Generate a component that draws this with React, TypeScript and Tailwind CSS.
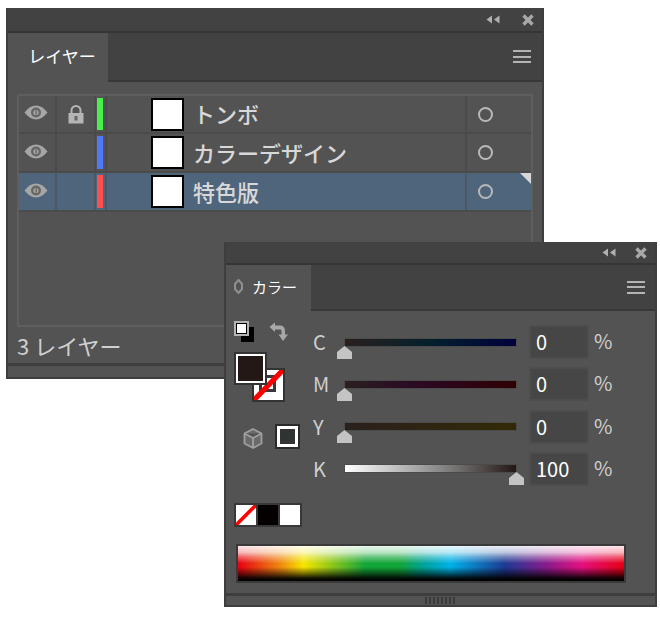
import React from 'react';

const layers = [
  { name: 'トンボ', color: 'bg-[#46f24a]', locked: true, selected: false, height: 'h-[36px]' },
  { name: 'カラーデザイン', color: 'bg-[#4f78fa]', locked: false, selected: false, height: 'h-[37px]' },
  { name: '特色版', color: 'bg-[#fb4f4f]', locked: false, selected: true, height: 'h-[37px]' },
];

const sliders = [
  { label: 'C', value: '0', track: 'bg-[linear-gradient(to_right,#2a201d,#04202c_50%,#00003c)]', thumb: 'left-[-8px]' },
  { label: 'M', value: '0', track: 'bg-[linear-gradient(to_right,#2a201d,#2a0a24_40%,#300004)]', thumb: 'left-[-8px]' },
  { label: 'Y', value: '0', track: 'bg-[linear-gradient(to_right,#2a201d,#322a06)]', thumb: 'left-[-8px]' },
  { label: 'K', value: '100', track: 'bg-[linear-gradient(to_right,#ffffff,#8a8a8a_55%,#231815)]', thumb: 'right-[-8px]' },
];

const Eye = () => (
  <svg className="-ml-[2px]" width="24" height="15" viewBox="0 0 24 15">
    <path d="M0.5 7.5C4 3 8 0.5 12 0.5S20 3 23.5 7.5C20 12 16 14.5 12 14.5S4 12 0.5 7.5Z" fill="#a6a6a6" />
    <circle cx="12" cy="7.5" r="5" fill="#666" />
    <circle cx="12" cy="7.5" r="2.6" fill="#a6a6a6" />
    <rect x="11.5" y="5.5" width="1.4" height="4" fill="#666" />
  </svg>
);

const Lock = () => (
  <svg width="16" height="19" viewBox="0 0 16 19">
    <path d="M3.5 8V5.5a4.5 4.5 0 0 1 9 0V8" fill="none" stroke="#b5b5b5" strokeWidth="2" />
    <rect x="0.5" y="8" width="15" height="10.5" fill="#b5b5b5" />
    <rect x="6.5" y="11" width="3" height="4.5" fill="#666" />
  </svg>
);

const Collapse = () => (
  <svg width="14" height="9" viewBox="0 0 14 9">
    <path d="M6 0.5V8.5L0.5 4.5Z M13.5 0.5V8.5L8 4.5Z" fill="#b0b0b0" />
  </svg>
);

const Close = () => (
  <svg width="12" height="12" viewBox="0 0 12 12">
    <path d="M1.5 1.5L10.5 10.5M10.5 1.5L1.5 10.5" stroke="#a8a8a8" strokeWidth="3.4" />
  </svg>
);

const Menu = () => (
  <div className="flex w-[18px] flex-col gap-[3.5px]">
    <div className="h-[2px] bg-[#b4b4b4]" />
    <div className="h-[2px] bg-[#b4b4b4]" />
    <div className="h-[2px] bg-[#b4b4b4]" />
  </div>
);

// diagonal red "none" stroke
const NoneLine = () => (
  <svg className="absolute inset-0 h-full w-full" viewBox="0 0 20 20" preserveAspectRatio="none">
    <path d="M0 20L20 0" stroke="#ff0000" strokeWidth="3.6" />
  </svg>
);

const LayerRow = ({ name, color, locked, selected, height }: (typeof layers)[number]) => {
  const sep = selected ? 'bg-[#4a5868]' : 'bg-[#4b4b4b]';
  return (
    <div className={`relative flex ${height} items-stretch ${selected ? 'bg-[#4f657c]' : 'bg-[#535353]'}`}>
      <div className="flex w-[36px] items-center justify-center pb-[3px]">
        <Eye />
      </div>
      <div className={`w-[2px] ${sep}`} />
      <div className="flex w-[37px] items-center justify-center">{locked && <Lock />}</div>
      <div className={`w-[2px] ${sep}`} />
      <div className={`my-[2px] ml-[1px] w-[6px] ${color}`} />
      <div className={`ml-[2px] w-[2px] ${sep}`} />
      <div className="ml-[44px] flex items-center">
        <div className="h-[33px] w-[33px] border-2 border-black bg-white" />
      </div>
      <div className="ml-[9px] flex flex-1 items-center pb-[2px] text-[22px] font-medium leading-none text-[#d8d8d8]">{name}</div>
      <div className={`w-[2px] ${sep}`} />
      <div className="flex w-[64px] items-center pl-[11px]">
        <div className="h-[15px] w-[15px] rounded-full border-2 border-[#b8b8b8]" />
      </div>
      {selected && (
        <div className="absolute right-0 top-0 h-[11px] w-[11px] bg-[#d8d8d8] [clip-path:polygon(0_0,100%_0,100%_100%)]" />
      )}
    </div>
  );
};

const LayersPanel = () => (
  <div className="absolute left-[6px] top-[8px] flex h-[371px] w-[538px] flex-col border-x-2 border-b-2 border-[#3e3e3e] bg-[#535353]">
    <div className="flex h-[25px] shrink-0 items-center justify-end gap-[22px] border-b-2 border-[#353535] bg-[#424242] pr-[8px]">
      <Collapse />
      <Close />
    </div>
    <div className="flex h-[49px] shrink-0 border-b-2 border-[#383838] bg-[#424242]">
      <div className="mb-[-2px] flex w-[100px] items-center justify-center bg-[#535353] pb-[4px] pl-[8px] text-[17px] leading-none text-white">
        レイヤー
      </div>
      <div className="flex flex-1 items-center justify-end pr-[11px]">
        <Menu />
      </div>
    </div>
    <div className="mx-[9px] mt-[12px] flex h-[233px] shrink-0 flex-col border-2 border-[#5e5e5e]">
      <LayerRow {...layers[0]} />
      <div className="h-[2px] bg-[#4b4b4b]" />
      <LayerRow {...layers[1]} />
      <div className="h-[2px] bg-[#4b4b4b]" />
      <LayerRow {...layers[2]} />
      <div className="h-[2px] bg-[#4b4b4b]" />
    </div>
    <div className="flex h-[36px] shrink-0 items-center pl-[9px] text-[22px] leading-none text-[#cfcfcf]">3 レイヤー</div>
    <div className="h-[3px] shrink-0 bg-[#3e3e3e]" />
  </div>
);

const SliderRow = ({ label, value, track, thumb }: (typeof sliders)[number]) => (
  <div className="flex h-[34px] items-center">
    <div className="w-[32px] text-[20px] leading-none text-[#cfcfcf]">{label}</div>
    <div className={`relative h-[7px] w-[171px] ${track} outline-1 outline-[#4b4b4b]`}>
      <svg className={`absolute top-[7px] ${thumb}`} width="15" height="13" viewBox="0 0 15 13">
        <path d="M7.5 0L15 6V13H0V6Z" fill="#c4c4c4" />
      </svg>
    </div>
    <div className="ml-[13px] flex h-[34px] w-[60px] items-center rounded-[3px] border-2 border-[#4d4d4d] bg-[#464646] pl-[5px] text-[20px] leading-none text-white">
      {value}
    </div>
    <div className="ml-[5px] mb-[2px] text-[20px] leading-none text-[#cfcfcf]">%</div>
  </div>
);

const ColorTools = () => (
  <div className="flex w-[78px] flex-col">
    <div className="flex h-[24px] items-start">
      <div className="relative h-[21px] w-[20px]">
        <div className="absolute bottom-0 right-0 h-[15px] w-[13px] bg-black" />
        <div className="absolute left-0 top-0 h-[15px] w-[15px] border-2 border-[#b5b5b5] bg-white shadow-[inset_0_0_0_1px_#000]" />
      </div>
      <svg className="ml-[15px] mt-[1px]" width="20" height="20" viewBox="0 0 20 20">
        <path d="M6 0.5V3.5H11C14.5 3.5 16 6 16 9V12.5H19L14 19L9.5 12.5H12.5V9C12.5 8 12 7.5 11 7.5H6V10L0.5 5Z" fill="#a8a8a8" />
      </svg>
    </div>
    <div className="relative mt-[7px] h-[50px]">
      <div className="absolute left-[18px] top-[16px] h-[34px] w-[33px] overflow-hidden border-2 border-[#333] bg-white">
        <div className="absolute left-[5px] top-[5px] h-[17px] w-[17px] border-[3px] border-[#3a3a3a]" />
        <NoneLine />
      </div>
      <div className="absolute left-0 top-0 h-[33px] w-[33px] border-2 border-[#333] bg-[#231815] outline-2 outline-white -outline-offset-4" />
    </div>
    <div className="mt-[22px] flex items-center">
      <svg className="ml-[9px] mt-[3px]" width="20" height="21" viewBox="0 0 20 21">
        <path d="M10 1L18.5 5.5V15.5L10 20L1.5 15.5V5.5ZM1.5 5.5L10 10L18.5 5.5M10 10V20" fill="#6a6a6a" stroke="#a0a0a0" strokeWidth="1.8" strokeLinejoin="round" />
      </svg>
      <div className="ml-[12px] h-[25px] w-[25px] border-2 border-[#2a2a2a] bg-white p-[3px]">
        <div className="h-full w-full bg-[#2f3331]" />
      </div>
    </div>
  </div>
);

const ColorPanel = () => (
  <div className="absolute left-[224px] top-[242px] flex h-[365px] w-[433px] flex-col border-x-2 border-b-2 border-[#3e3e3e] bg-[#535353]">
    <div className="flex h-[23px] shrink-0 items-center justify-end gap-[19px] border-b-2 border-[#353535] bg-[#424242] pr-[8px]">
      <Collapse />
      <Close />
    </div>
    <div className="flex h-[46px] shrink-0 border-b-2 border-[#383838] bg-[#424242]">
      <div className="mb-[-2px] flex w-[85px] items-center bg-[#535353] pb-[4px] pl-[8px]">
        <svg width="9" height="15" viewBox="0 0 9 15">
          <path d="M4.5 1L8 5V10L4.5 14L1 10V5Z" fill="none" stroke="#8f8f8f" strokeWidth="2" />
        </svg>
        <span className="ml-[9px] text-[15px] leading-none text-white">カラー</span>
      </div>
      <div className="flex flex-1 items-center justify-end pr-[10px]">
        <Menu />
      </div>
    </div>
    <div className="flex shrink-0 pl-[8px] pt-[10px]">
      <ColorTools />
      <div className="ml-[1px] mt-[4px] flex flex-col gap-[8.3px]">
        {sliders.map((s) => (
          <SliderRow key={s.label} {...s} />
        ))}
      </div>
    </div>
    <div className="ml-[8px] mt-[17px] flex h-[24px] w-[68px] shrink-0 gap-[2px] border-2 border-[#383838] bg-[#383838]">
      <div className="relative flex-1 bg-white">
        <NoneLine />
      </div>
      <div className="flex-1 bg-[#040000]" />
      <div className="flex-1 bg-white" />
    </div>
    <div className="ml-[10px] mt-[17px] h-[39px] w-[390px] shrink-0 border-2 border-[#3a3a3a] bg-[linear-gradient(to_bottom,rgba(255,255,255,0.9),rgba(255,255,255,0.72)_18%,rgba(255,255,255,0.35)_32%,rgba(255,255,255,0)_50%),linear-gradient(to_bottom,rgba(0,0,0,0)_60%,rgba(0,0,0,0.5)_78%,rgba(0,0,0,0.92)_92%,#000_100%),linear-gradient(to_right,#e60012,#ef8a10_11%,#f6e500_17%,#12a538_33%,#12a538_42%,#00a39a_48%,#00b2e8_55%,#1d3a94_69%,#8a1a8c_80%,#e4107f_89%,#e60012_100%)]" />
    <div className="mt-[10px] h-[3px] shrink-0 bg-[#3e3e3e]" />
    <div className="flex flex-1 items-center justify-center">
      <div className="h-[7px] w-[32px] bg-[repeating-linear-gradient(to_right,#3a3a3a_0,#3a3a3a_2px,#535353_2px,#535353_4px)]" />
    </div>
  </div>
);

const App: React.FC = () => {
  return (
    <div className="relative h-[620px] w-[660px] overflow-hidden bg-white font-['Noto_Sans_CJK_JP','Noto_Sans',sans-serif]">
      <LayersPanel />
      <ColorPanel />
    </div>
  );
};

export default App;
